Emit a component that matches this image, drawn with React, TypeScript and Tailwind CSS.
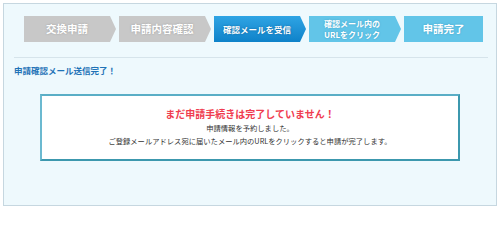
const font = { fontFamily: '"Noto Sans CJK JP", "Noto Sans", sans-serif' };

type Step = { label: string[]; tone: 'done' | 'current' | 'todo'; last?: boolean };

const steps: Step[] = [
  { label: ['交換申請'], tone: 'done' },
  { label: ['申請内容確認'], tone: 'done' },
  { label: ['確認メールを受信'], tone: 'current' },
  { label: ['確認メール内の', 'URLをクリック'], tone: 'todo' },
  { label: ['申請完了'], tone: 'todo', last: true },
];

function StepItem({ step }: { step: Step }) {
  const bg =
    step.tone === 'done'
      ? 'bg-[#c8c8c8] [text-shadow:0_0_2px_#9a9a9a]'
      : step.tone === 'current'
        ? 'bg-gradient-to-b from-[#2ea4e4] to-[#0d82c9] [text-shadow:0_0_2px_#0a5f96]'
        : 'bg-[#62c5e8] [text-shadow:0_0_2px_#3a9cc4]';
  const shape = step.last
    ? 'w-[79px]'
    : 'w-[92px] pr-[6px] [clip-path:polygon(0_0,calc(100%_-_6px)_0,100%_50%,calc(100%_-_6px)_100%,0_100%)]';
  const size =
    step.label.length > 1
      ? 'text-[8px] leading-[11px]'
      : step.label[0].length > 6
        ? 'text-[8.5px]'
        : 'text-[10.5px]';
  return (
    <div className={`h-[26px] shrink-0 flex flex-col items-center justify-center text-white font-bold ${bg} ${shape} ${size}`}>
      {step.label.map((l) => (
        <span key={l} className="block">{l}</span>
      ))}
    </div>
  );
}

export default function App() {
  return (
    <div className="w-[500px] h-[209px] bg-white p-[3px]" style={font}>
      <div className="h-[203px] border border-[#c6d7e0] bg-[#eef9fd]">
        {/* Progress steps */}
        <div className="flex gap-[3px] pt-[12px] pl-[20px]">
          {steps.map((s, i) => (
            <StepItem key={i} step={s} />
          ))}
        </div>

        <div className="mt-[15px] ml-[10px] mr-[8px] h-px bg-[#d6e4eb]" />

        <p className="mt-[7px] ml-[10px] text-[8.5px] leading-[10px] font-bold text-[#1f73b7]">
          申請確認メール送信完了！
        </p>

        {/* Notice box */}
        <div className="mt-[19px] ml-[36px] w-[420px] h-[67px] bg-white border-2 border-[#3c98ae] border-l-[#6bb9d0] border-t-[#5aaec6] flex flex-col items-center pt-[11px]">
          <p className="text-[10px] leading-[13px] font-bold text-[#f03c4f]">
            まだ申請手続きは完了していません！
          </p>
          <p className="mt-[2px] text-[7.3px] leading-[13px] text-[#333]">申請情報を予約しました。</p>
          <p className="text-[7.3px] leading-[13px] text-[#333]">
            ご登録メールアドレス宛に届いたメール内のURLをクリックすると申請が完了します。
          </p>
        </div>
      </div>
    </div>
  );
}
